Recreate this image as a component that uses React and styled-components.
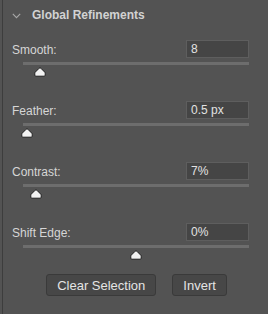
import React from 'react';
import styled, {createGlobalStyle} from "styled-components";

const GlobalStyle = createGlobalStyle`
  html, body {
    margin: 0;
    padding: 0;
    background: #535353;
  }
  body {
    font-family: "Liberation Sans", Arial, sans-serif;
  }
`

const sliders = [
    {label: 'Smooth:', value: '8', pct: 7.6},
    {label: 'Feather:', value: '0.5 px', pct: 1.8},
    {label: 'Contrast:', value: '7%', pct: 5.8},
    {label: 'Shift Edge:', value: '0%', pct: 49.8},
];

function Thumb() {
    return (
        <svg width="12" height="10" viewBox="0 0 12 10">
            <path d="M6 0.8 Q6.4 0.8 7 1.4 L10.6 5 Q11.2 5.6 11.2 6.4 L11.2 8.2 Q11.2 9.2 10.2 9.2 L1.8 9.2 Q0.8 9.2 0.8 8.2 L0.8 6.4 Q0.8 5.6 1.4 5 L5 1.4 Q5.6 0.8 6 0.8 Z"
                  fill="#f2f2f2" stroke="#1e1e1e" strokeWidth="1"/>
        </svg>
    );
}

function SliderGroup({label, value, pct}) {
    return (
        <Group>
            <Row>
                <Label>{label}</Label>
                <ValueBox>{value}</ValueBox>
            </Row>
            <Track/>
            <ThumbLane>
                <ThumbHolder style={{left: `${pct}%`}}>
                    <Thumb/>
                </ThumbHolder>
            </ThumbLane>
        </Group>
    );
}

function App() {
    return (
        <>
            <GlobalStyle/>
            <Panel>
                <Header>
                    <Chevron width="9" height="6" viewBox="0 0 9 6">
                        <path d="M0.8 0.8 L4.5 4.6 L8.2 0.8" fill="none" stroke="#a8a8a8" strokeWidth="1.1"/>
                    </Chevron>
                    <Title>Global Refinements</Title>
                </Header>
                <Groups>
                    {sliders.map(s => <SliderGroup key={s.label} {...s}/>)}
                </Groups>
                <Buttons>
                    <Button>Clear Selection</Button>
                    <Button>Invert</Button>
                </Buttons>
            </Panel>
        </>
    );
}

const Panel = styled.div`
  width: 266px;
  height: 314px;
  margin-left: 2px;
  border-left: 1px solid #3d3d3d;
  box-sizing: border-box;
  background: #535353;
  color: #d4d4d4;
`

const Header = styled.div`
  display: flex;
  align-items: center;
  height: 30px;
  padding-left: 9px;
`

const Chevron = styled.svg`
  display: block;
  margin-right: 11px;
  margin-top: 1px;
`

const Title = styled.span`
  font-size: 12px;
  font-weight: bold;
  color: #d2d2d2;
`

const Groups = styled.div`
  display: flex;
  flex-direction: column;
  gap: 24px;
  padding-top: 10px;
`

const Group = styled.div`
  display: flex;
  flex-direction: column;
`

const Row = styled.div`
  display: flex;
  align-items: center;
  justify-content: space-between;
  padding: 0 19px 0 9px;
  height: 18px;
`

const Label = styled.span`
  font-size: 12px;
  color: #d6d6d6;
  margin-top: 1px;
`

const ValueBox = styled.div`
  width: 63px;
  height: 18px;
  box-sizing: border-box;
  border: 1px solid #5e5e5e;
  background: #454545;
  padding: 0 4px;
  font-size: 12px;
  line-height: 16px;
  color: #e2e2e2;
`

const Track = styled.div`
  margin: 4px 19px 0 20px;
  height: 3px;
  background: #6d6d6d;
`

const ThumbLane = styled.div`
  position: relative;
  margin: 2px 19px 0 20px;
  height: 10px;
`

const ThumbHolder = styled.div`
  position: absolute;
  top: 0;
  transform: translateX(-6px);
  line-height: 0;
`

const Buttons = styled.div`
  display: flex;
  justify-content: center;
  gap: 16px;
  margin-top: 14px;
  padding-left: 2px;
`

const Button = styled.button`
  height: 22px;
  padding: 0 10px;
  background: #474747;
  border: 1px solid #3a3a3a;
  border-radius: 3px;
  font-family: "Liberation Sans", Arial, sans-serif;
  font-size: 13px;
  color: #e4e4e4;
`

export default App;
